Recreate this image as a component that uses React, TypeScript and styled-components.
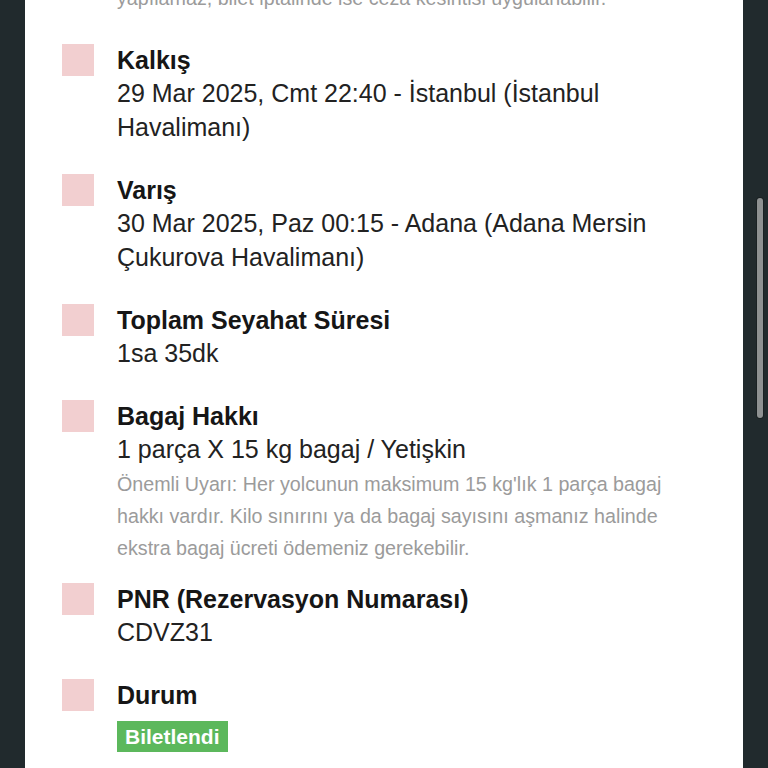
import React from "react";
import styled, { createGlobalStyle } from "styled-components";

const GlobalStyle = createGlobalStyle`
  html, body {
    margin: 0;
    padding: 0;
    background: #212a2d;
  }
  * { box-sizing: border-box; }
`;

const Screen = styled.div`
  display: grid;
  grid-template-columns: 25px 1fr 25px;
  width: 768px;
  height: 768px;
  overflow: hidden;
  background: #212a2d;
  font-family: "Liberation Sans", Arial, Helvetica, sans-serif;
`;

const Rail = styled.div`
  background: #212a2d;
`;

const ScrollRail = styled(Rail)`
  padding-top: 198px;
  padding-left: 14px;
`;

const Thumb = styled.div`
  width: 6px;
  height: 220px;
  border-radius: 3px;
  background: #8e9192;
  box-shadow: 0 0 0 1px #1a2123;
`;

const Card = styled.main`
  background: #ffffff;
  padding: 0 43px 0 37px;
  overflow: hidden;
`;

const Feed = styled.div`
  display: flex;
  flex-direction: column;
  gap: 30px;
  margin-top: -20px;
`;

const Item = styled.section`
  display: flex;
  align-items: flex-start;
  gap: 23px;
`;

const Marker = styled.div`
  flex: 0 0 32px;
  width: 32px;
  height: 32px;
  background: #f2cfd0;
`;

const Body = styled.div<{ $indent?: boolean }>`
  flex: 1;
  min-width: 0;
  display: flex;
  flex-direction: column;
  padding-left: ${(p) => (p.$indent ? "55px" : "0")};
`;

const Title = styled.h3`
  margin: 0;
  font-size: 25px;
  line-height: 32px;
  font-weight: 700;
  color: #161616;
`;

const Value = styled.p`
  margin: 0;
  font-size: 25px;
  line-height: 34px;
  color: #222222;
`;

const Note = styled.p<{ $tight?: boolean }>`
  margin: 2px 0 ${(p) => (p.$tight ? "-11px" : "0")};
  font-size: 19.7px;
  line-height: 32px;
  color: #9b9b9b;
`;

const Badge = styled.span`
  align-self: flex-start;
  margin-top: 10px;
  height: 31px;
  padding: 0 8px;
  background: #5cb85c;
  color: #ffffff;
  font-size: 21px;
  font-weight: 700;
  line-height: 31px;
`;

type Row = {
  title: string;
  value?: string;
  note?: string;
  badge?: string;
};

const rows: Row[] = [
  { title: "Kalkış", value: "29 Mar 2025, Cmt 22:40 - İstanbul (İstanbul Havalimanı)" },
  { title: "Varış", value: "30 Mar 2025, Paz 00:15 - Adana (Adana Mersin Çukurova Havalimanı)" },
  { title: "Toplam Seyahat Süresi", value: "1sa 35dk" },
  {
    title: "Bagaj Hakkı",
    value: "1 parça X 15 kg bagaj / Yetişkin",
    note: "Önemli Uyarı: Her yolcunun maksimum 15 kg'lık 1 parça bagaj hakkı vardır. Kilo sınırını ya da bagaj sayısını aşmanız halinde ekstra bagaj ücreti ödemeniz gerekebilir.",
  },
  { title: "PNR (Rezervasyon Numarası)", value: "CDVZ31" },
  { title: "Durum", badge: "Biletlendi" },
];

export default function App() {
  return (
    <>
      <GlobalStyle />
      <Screen>
        <Rail />
        <Card>
          <Feed>
            <Body $indent>
              <Note>yapılamaz, bilet iptalinde ise ceza kesintisi uygulanabilir.</Note>
            </Body>
            {rows.map((r) => (
              <Item key={r.title}>
                <Marker />
                <Body>
                  <Title>{r.title}</Title>
                  {r.value && <Value>{r.value}</Value>}
                  {r.note && <Note $tight>{r.note}</Note>}
                  {r.badge && <Badge>{r.badge}</Badge>}
                </Body>
              </Item>
            ))}
          </Feed>
        </Card>
        <ScrollRail>
          <Thumb />
        </ScrollRail>
      </Screen>
    </>
  );
}
